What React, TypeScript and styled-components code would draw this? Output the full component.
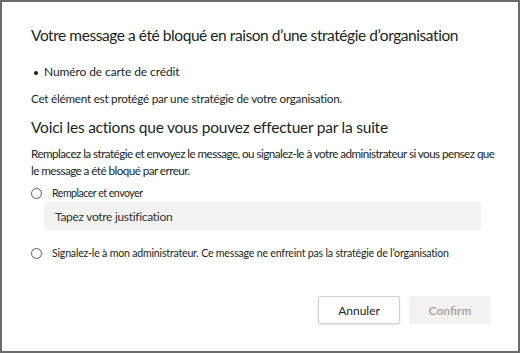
import React from "react";
import styled, { createGlobalStyle } from "styled-components";

const Global = createGlobalStyle`
  html, body { margin: 0; padding: 0; background: #fff; }
  body { font-family: Lato, "Liberation Sans", Arial, sans-serif; color: #201f1e; }
`;

const Dialog = styled.div`
  box-sizing: border-box;
  width: 520px;
  height: 353px;
  border: 2px solid #6b6b6b;
  background: #fff;
  padding: 22px 27px 0 29px;
  display: flex;
  flex-direction: column;
`;

const Title = styled.h1`
  margin: 0;
  font-size: 15.5px;
  font-weight: 400;
  letter-spacing: -0.44px;
  line-height: 22px;
  white-space: nowrap;
  color: #201f1e;
`;

const Bullets = styled.ul`
  margin: 18px 0 0 0;
  padding: 0 0 0 13px;
  font-size: 12px;
  letter-spacing: -0.1px;
  line-height: 16px;
  list-style: none;
`;

const Bullet = styled.li`
  position: relative;
  &::before {
    content: "";
    position: absolute;
    left: -10px;
    top: 7px;
    width: 4px;
    height: 4px;
    border-radius: 50%;
    background: #201f1e;
  }
`;

const Text = styled.p<{ $top: number; $tight?: boolean }>`
  margin: ${(p) => p.$top}px 0 0 0;
  font-size: 11.7px;
  letter-spacing: ${(p) => (p.$tight ? "-0.56px" : "-0.24px")};
  line-height: 17px;
  white-space: nowrap;
`;

const Subtitle = styled.h2`
  margin: 9px 0 0 0;
  font-size: 15.5px;
  font-weight: 400;
  letter-spacing: -0.23px;
  line-height: 22px;
  white-space: nowrap;
`;

const RadioRow = styled.label<{ $top: number; $compact?: boolean }>`
  display: flex;
  align-items: center;
  gap: 10px;
  margin-top: ${(p) => p.$top}px;
  font-size: 10.6px;
  letter-spacing: ${(p) => (p.$compact ? "-0.5px" : "-0.2px")};
  line-height: 14px;
  white-space: nowrap;
  cursor: pointer;
`;

const RadioCircle = styled.span`
  box-sizing: border-box;
  width: 11px;
  height: 11px;
  border-radius: 50%;
  border: 1px solid #605e5c;
  background: #fff;
  flex: none;
`;

const Justification = styled.div`
  margin: 2px 10px 0 13px;
  height: 28px;
  background: #f3f2f1;
  border-radius: 2px;
  display: flex;
  align-items: center;
  padding-left: 11px;
  font-size: 12px;
  letter-spacing: -0.3px;
  color: #323130;
`;

const Footer = styled.div`
  margin-top: auto;
  margin-bottom: 27px;
  display: flex;
  justify-content: flex-end;
  gap: 9px;
`;

const Button = styled.button<{ $primary?: boolean }>`
  box-sizing: border-box;
  width: 82px;
  height: 28px;
  border-radius: 2px;
  font-family: Lato, "Liberation Sans", Arial, sans-serif;
  font-size: 12px;
  border: 1px solid ${(p) => (p.$primary ? "#f3f2f1" : "#d2d0ce")};
  background: ${(p) => (p.$primary ? "#f3f2f1" : "#fff")};
  color: ${(p) => (p.$primary ? "#a19f9d" : "#201f1e")};
  font-weight: ${(p) => (p.$primary ? 600 : 400)};
  box-shadow: ${(p) => (p.$primary ? "none" : "0 1px 2px rgba(0,0,0,0.12)")};
  padding: 0;
`;

export default function App() {
  return (
    <>
      <Global />
      <Dialog>
        <Title>Votre message a été bloqué en raison d’une stratégie d’organisation</Title>
        <Bullets>
          <Bullet>Numéro de carte de crédit</Bullet>
        </Bullets>
        <Text $top={10}>Cet élément est protégé par une stratégie de votre organisation.</Text>
        <Subtitle>Voici les actions que vous pouvez effectuer par la suite</Subtitle>
        <Text $top={7} $tight>
          Remplacez la stratégie et envoyez le message, ou signalez-le à votre administrateur si vous pensez que
          <br />
          le message a été bloqué par erreur.
        </Text>
        <RadioRow $top={7} $compact>
          <RadioCircle />
          Remplacer et envoyer
        </RadioRow>
        <Justification>Tapez votre justification</Justification>
        <RadioRow $top={16}>
          <RadioCircle />
          Signalez-le à mon administrateur. Ce message ne enfreint pas la stratégie de l’organisation
        </RadioRow>
        <Footer>
          <Button>Annuler</Button>
          <Button $primary disabled>Confirm</Button>
        </Footer>
      </Dialog>
    </>
  );
}
